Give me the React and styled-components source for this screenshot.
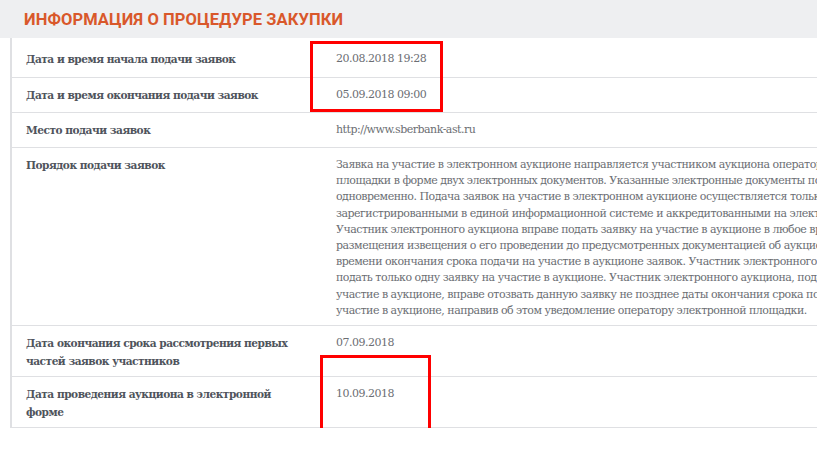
import styled, { createGlobalStyle } from 'styled-components'

const Global = createGlobalStyle`
  html, body { margin: 0; background: #fff; overflow: hidden; }
  body { font-family: "DejaVu Serif", "Liberation Serif", serif; }
`

const Page = styled.div`
  width: 940px;
  position: relative;
`

const Header = styled.div`
  background: #eeeff1;
  height: 38px;
  display: flex;
  align-items: center;
  padding-left: 24px;
  font-family: "Roboto", "Liberation Sans", sans-serif;
  font-weight: 700;
  font-size: 16.5px;
  color: #d9582b;
  letter-spacing: 0.1px;
`

const Table = styled.div`
  margin-left: 10px;
  border-left: 2px solid #dfe0e3;
  padding-top: 2px;
`

const Row = styled.div`
  display: grid;
  grid-template-columns: 310px 600px;
  border-bottom: 1px solid #dfe0e3;
  padding: ${p => p.pad || '11px'} 0 ${p => p.padB || p.pad || '11px'};
`

const Label = styled.div`
  padding-left: 14px;
  padding-right: 20px;
  font-size: 10.6px;
  font-weight: 700;
  color: #4f545c;
  line-height: 18px;
  letter-spacing: -0.5px;
`

const Value = styled.div`
  padding-left: 14px;
  font-size: 11px;
  color: #6b6e73;
  line-height: 16.2px;
  letter-spacing: -0.5px;
  padding-top: 1px;
`

const Mark = styled.div`
  position: absolute;
  border: 3px solid #f00;
  box-sizing: border-box;
`

const DESC = 'Заявка на участие в электронном аукционе направляется участником аукциона оператору электронной площадки в форме двух электронных документов. Указанные электронные документы подаются одновременно. Подача заявок на участие в электронном аукционе осуществляется только лицами, зарегистрированными в единой информационной системе и аккредитованными на электронной площадке. Участник электронного аукциона вправе подать заявку на участие в аукционе в любое время с момента размещения извещения о его проведении до предусмотренных документацией об аукционе даты и времени окончания срока подачи на участие в аукционе заявок. Участник электронного аукциона вправе подать только одну заявку на участие в аукционе. Участник электронного аукциона, подавший заявку на участие в аукционе, вправе отозвать данную заявку не позднее даты окончания срока подачи заявок на участие в аукционе, направив об этом уведомление оператору электронной площадки.'

export default function App() {
  return (
    <Page>
      <Global />
      <Header>ИНФОРМАЦИЯ О ПРОЦЕДУРЕ ЗАКУПКИ</Header>
      <Table>
        <Row pad="10px" padB="9px"><Label>Дата и время начала подачи заявок</Label><Value>20.08.2018 19:28</Value></Row>
        <Row pad="8px" padB="8px"><Label>Дата и время окончания подачи заявок</Label><Value>05.09.2018 09:00</Value></Row>
        <Row pad="8px" padB="8px"><Label>Место подачи заявок</Label><Value>http://www.sberbank-ast.ru</Value></Row>
        <Row pad="8px" padB="6px"><Label>Порядок подачи заявок</Label><Value>{DESC}</Value></Row>
        <Row pad="8px" padB="6px"><Label>Дата окончания срока рассмотрения первых частей заявок участников</Label><Value>07.09.2018</Value></Row>
        <Row pad="8px" padB="6px"><Label>Дата проведения аукциона в электронной форме</Label><Value>10.09.2018</Value></Row>
      </Table>
      <Mark style={{ left: 310, top: 41, width: 133, height: 71 }} />
      <Mark style={{ left: 320, top: 355, width: 111, height: 93 }} />
    </Page>
  )
}
